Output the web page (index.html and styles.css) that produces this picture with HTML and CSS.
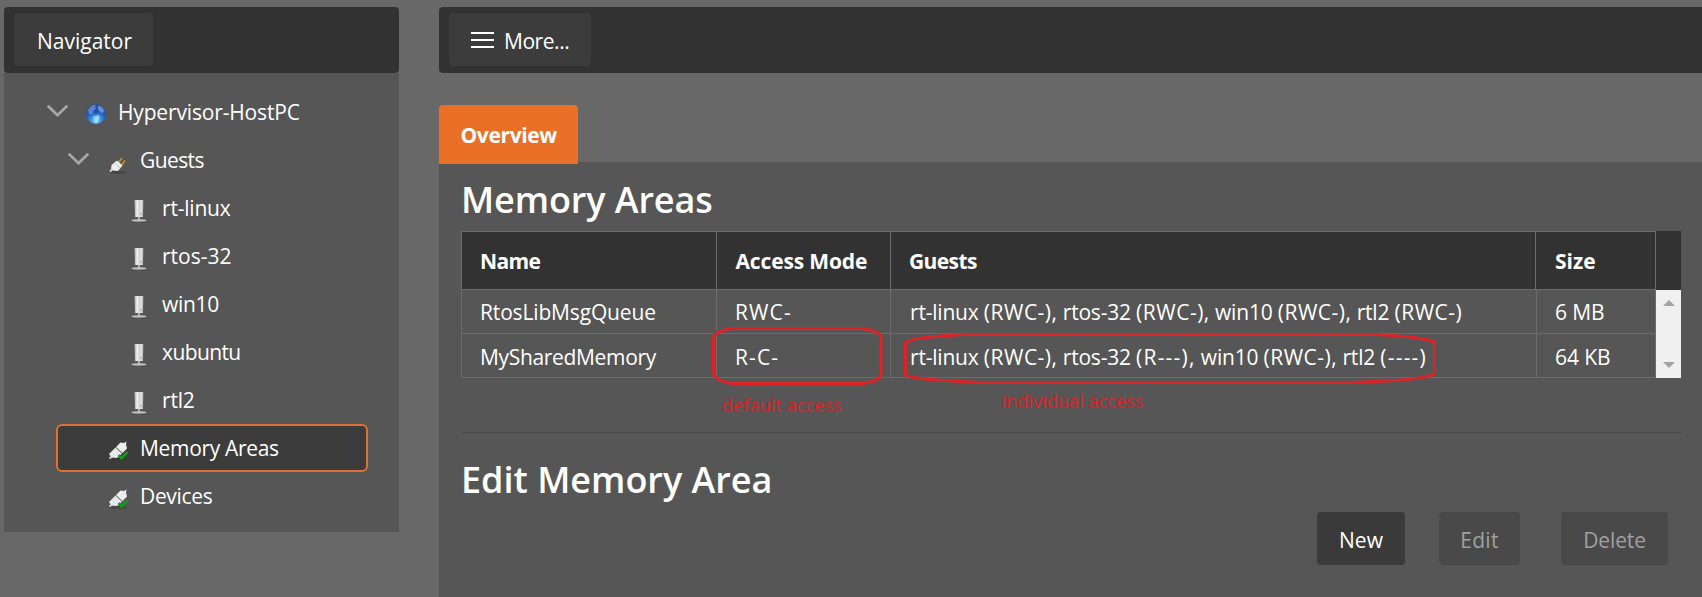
FILE: index.html
```
<!DOCTYPE html>
<html lang="en">
<head>
<meta charset="utf-8">
<title>Memory Areas</title>
<link rel="stylesheet" href="styles.css">
</head>
<body>
<svg class="defs" aria-hidden="true">
  <defs>
    <radialGradient id="globe-fill" cx="50%" cy="85%" r="80%">
      <stop offset="0" stop-color="#86e2ff"/><stop offset=".3" stop-color="#3f93e4"/><stop offset=".65" stop-color="#2458b8"/><stop offset="1" stop-color="#2a4c9c"/>
    </radialGradient>
    <linearGradient id="tower-fill"><stop offset="0" stop-color="#a8a8a8"/><stop offset=".3" stop-color="#f2f2f2"/><stop offset=".55" stop-color="#cfcfcf"/><stop offset=".75" stop-color="#e6e6e6"/><stop offset="1" stop-color="#999"/></linearGradient>
    <symbol id="chevron" viewBox="0 0 21 12"><path d="M1.500 1.500 10.500 10.300 19.500 1.500" fill="none" stroke="#a9a9a9" stroke-width="2.600" stroke-linecap="round"/></symbol>
    <symbol id="globe" viewBox="0 0 24 24">
      <circle cx="12" cy="12" r="10" fill="url(#globe-fill)"/>
      <path d="M4 8C6 4 9 2.600 12 3L11 5 12 7 9 9 8 12 5 12Z" fill="#8fb4ea" opacity=".5"/>
      <path d="M14 3.500 18 5 20 8 19 11 16 10 14 7Z" fill="#a9d0f6" opacity=".5"/>
      <path d="M9 15 14 13 16 15 14 19 12 21 10 18Z" fill="#b9f1ff" opacity=".6"/>
      <path d="M12 7 15 10 13 12 10 12 10 9Z" fill="#163b8e" opacity=".45"/>
    </symbol>
    <symbol id="plug" viewBox="0 0 24 24">
      <ellipse cx="12" cy="22.400" rx="8" ry="1.200" fill="#333" opacity=".55"/>
      <path d="M12.500 12.500 16 8M15.500 15 19 10.500" stroke="#c99a26" stroke-width="1.500"/>
      <path d="M5 20 5.500 15 11 10.500 16.500 15.500 12 21 7.500 20.500Z" fill="#eee"/>
      <path d="M8.500 12.500 14 18" stroke="#c5c5c5" stroke-width="1"/>
      <path d="M4 21.500 6.500 19" stroke="#d4d4d4" stroke-width="2"/>
    </symbol>
    <symbol id="tower" viewBox="0 0 24 24">
      <path d="M7.500 1H16.500L16 18H8Z" fill="url(#tower-fill)"/>
      <path d="M12 18V21" stroke="#ccc" stroke-width="1.600"/>
      <ellipse cx="12" cy="21.400" rx="7.500" ry="1.200" fill="#c4c4c4"/>
      <circle cx="14" cy="15" r=".7" fill="#777"/>
    </symbol>
    <symbol id="plug-ok" viewBox="0 0 24 24">
      <ellipse cx="12" cy="21.500" rx="9" ry="1.300" fill="#333" opacity=".5"/>
      <path d="M3.500 20.500 6.500 18" stroke="#ccc" stroke-width="2"/>
      <path d="M3 16 9.500 9.500 16 15.500 11 20 5.500 19.500Z" fill="#e8e8e8"/>
      <path d="M10 9 14.500 4.500 18 5 20.500 3.500 20 6.500 21 10.500 16.500 15Z" fill="#ededed"/>
      <path d="M9.800 9.300 16.200 15.500" stroke="#8a8a8a" stroke-width=".9"/>
      <path d="M12.500 17 15.500 20.300 21.500 14" fill="none" stroke="#149a22" stroke-width="2.600"/>
    </symbol>
  </defs>
</svg>

<aside class="sidebar">
  <header class="bar"><button class="bar-button navigator">Navigator</button></header>
  <ul class="tree">
    <li class="node level-0"><svg class="chevron"><use href="#chevron"/></svg><svg class="icon globe"><use href="#globe"/></svg><span class="t-host">Hypervisor-HostPC</span></li>
    <li class="node level-1"><svg class="chevron"><use href="#chevron"/></svg><svg class="icon"><use href="#plug"/></svg><span class="t-guests">Guests</span></li>
    <li class="node level-2"><svg class="icon"><use href="#tower"/></svg><span>rt-linux</span></li>
    <li class="node level-2"><svg class="icon"><use href="#tower"/></svg><span class="t-rtos">rtos-32</span></li>
    <li class="node level-2"><svg class="icon"><use href="#tower"/></svg><span class="t-win">win10</span></li>
    <li class="node level-2"><svg class="icon"><use href="#tower"/></svg><span class="t-guests">xubuntu</span></li>
    <li class="node level-2"><svg class="icon"><use href="#tower"/></svg><span>rtl2</span></li>
    <li class="node level-1 selected"><svg class="icon"><use href="#plug-ok"/></svg><span class="t-win">Memory Areas</span></li>
    <li class="node level-1 leaf"><svg class="icon"><use href="#plug-ok"/></svg><span class="t-win">Devices</span></li>
  </ul>
</aside>

<main class="main">
  <header class="bar">
    <button class="bar-button more"><svg class="burger" viewBox="0 0 23 16"><path d="M0 1H23M0 8H23M0 15H23" stroke="#fff" stroke-width="2"/></svg>More...</button>
  </header>
  <nav class="tabs"><span class="tab">Overview</span></nav>
  <section class="panel">
    <h1 class="title">Memory Areas</h1>
    <div class="table">
      <div class="row head">
        <div class="cell t-name">Name</div><div class="cell t-access">Access Mode</div><div class="cell t-guests">Guests</div><div class="cell">Size</div>
      </div>
      <div class="corner"></div>
      <div class="body">
        <div class="row">
          <div class="cell t-queue">RtosLibMsgQueue</div>
          <div class="cell mode">RWC-</div>
          <div class="cell list">rt-linux <span class="acc">(RWC-),</span> rtos-32 <span class="acc">(RWC-),</span> win10 <span class="acc">(RWC-),</span> rtl2 <span class="acc">(RWC-)</span></div>
          <div class="cell size">6 MB</div>
        </div>
        <div class="row second">
          <div class="cell t-win">MySharedMemory</div>
          <div class="cell mode">R-C-</div>
          <div class="cell list">rt-linux <span class="acc">(RWC-),</span> rtos-32 <span class="acc-none">(R---),</span> win10 <span class="acc">(RWC-),</span> rtl2 <span class="acc-none">(----)</span></div>
          <div class="cell size">64 KB</div>
        </div>
      </div>
      <div class="scrollbar"><i class="arrow up"></i><i class="arrow down"></i></div>
    </div>
    <hr class="rule">
    <h1 class="title edit">Edit Memory Area</h1>
    <div class="actions">
      <button class="action new">New</button>
      <button class="action edit-button disabled">Edit</button>
      <button class="action delete disabled">Delete</button>
    </div>
  </section>
</main>

<svg class="notes" viewBox="0 0 1702 597">
  <g fill="none" stroke="#dc2328" stroke-width="3" stroke-linejoin="round">
    <path d="M732 328.500H862C872 330 881 332.500 881 338V375C880 380 871 382 863 383.500H732C723 382 714.500 379 713.500 373V338C714 332.500 724 329.500 732 328.500Z"/>
    <path d="M962 334.500H1376C1398 336 1419 336.500 1434.500 342V374C1424 379 1402 380 1386 381L1352 382.500H982C955 381 918 380.500 905.500 375V343C910 338 932 336.500 962 334.500Z"/>
  </g>
  <text class="note" x="722" y="412">default access</text>
  <text class="note" x="1001.500" y="408">individual access</text>
</svg>
</body>
</html>
```
FILE: styles.css
```
* { box-sizing: border-box; }
body {
  margin: 0;
  height: 597px;
  padding: 7px 0 0 4px;
  display: flex;
  gap: 40px;
  position: relative;
  overflow: hidden;
  background: #686868;
  color: #fff;
  font: 21px "Open Sans", "Noto Sans", sans-serif;
}
button { font: inherit; color: inherit; border: 0; padding: 0; }
.defs { position: absolute; width: 0; height: 0; }

.bar {
  height: 66px;
  padding: 6px 10px;
  background: #323232;
  border-radius: 4px;
}
.bar-button {
  height: 53px;
  padding-top: 3px;
  background: #3c3c3c;
  border-radius: 4px;
  display: flex;
  align-items: center;
}
.navigator { width: 139px; padding-left: 23px; }
.more { width: 142px; padding-left: 22px; gap: 10px; letter-spacing: -0.45px; }
.burger { width: 23px; height: 16px; margin-top: -3px; }

/* navigator tree */
.sidebar { flex: none; width: 395px; }
.tree {
  height: 459px;
  margin: 0;
  padding: 15px 0 0;
  list-style: none;
  background: #565656;
}
.node {
  display: flex;
  align-items: center;
  height: 48px;
  letter-spacing: -0.2px;
}
.level-0 { padding-left: 43px; }
.level-1 { padding-left: 64px; }
.level-2 { padding-left: 123px; }
.leaf { padding-left: 102px; }
.chevron { width: 21px; height: 12px; margin: -3px 17px 0 0; }
.icon { width: 24px; height: 24px; margin: 6px 11px 0 0; }
.globe { margin: 4px 10px 0 -1px; }
.level-1 .icon { margin: 4px 10px 0 0; }
.selected {
  width: 312px;
  margin-left: 52px;
  padding-left: 48px;
  background: #3c3c3c;
  border: 2px solid #df7233;
  border-radius: 6px;
}

/* letter fitting */
.t-host { letter-spacing: -0.16px; }
.t-guests { letter-spacing: -0.6px; }
.t-rtos { letter-spacing: 0; }
.t-win { letter-spacing: -0.33px; }
.t-name { letter-spacing: -0.6px; }
.t-access { letter-spacing: -0.15px; }
.t-queue { letter-spacing: -0.16px; }

/* main area */
.main { flex: 1; display: flex; flex-direction: column; }
.main > .bar { border-radius: 4px 0 0 4px; flex: none; }
.tabs { display: flex; height: 57px; margin-top: 32px; }
.tab {
  width: 139px;
  height: 59px;
  line-height: 61px;
  padding-left: 21.5px;
  background: #ea6f27;
  border-radius: 4px 4px 0 0;
  font-weight: 700;
  letter-spacing: -0.36px;
  z-index: 1;
}
.panel { flex: 1; padding: 13px 21px 0 22px; background: #565656; }
.title {
  margin: 0;
  height: 48px;
  line-height: 50px;
  font-size: 36px;
  font-weight: 600;
  letter-spacing: -0.1px;
}
.table {
  display: grid;
  grid-template: 59px 88px / 1195px 25px;
  margin-top: 8px;
}
.row { display: grid; grid-template-columns: 255px 174px 646px 120px; height: 44px; border-bottom: 1px solid #6c6c6c; }
.cell { border-left: 1px solid #6c6c6c; padding-left: 18px; line-height: 45px; height: 43px; white-space: nowrap; }
.cell:last-child { border-right: 1px solid #6c6c6c; }
.second .cell { line-height: 46px; }
.head {
  grid-template-columns: 255px 174px 645px 121px;
  height: 59px;
  border-top: 1px solid #6c6c6c;
  background: #323232;
  font-weight: 700;
}
.head .cell { line-height: 58px; height: 57px; }
.head .cell:last-child { padding-left: 19px; }
.head .t-access { padding-left: 18.5px; }
.corner { background: #323232; }
.mode { letter-spacing: 1.1px; }
.cell.list { padding-left: 19px; letter-spacing: -0.2px; }
.acc { letter-spacing: 0.5px; }
.acc-none { letter-spacing: 1.2px; }
.size { letter-spacing: -0.1px; }
.scrollbar {
  display: flex;
  flex-direction: column;
  justify-content: space-between;
  align-items: center;
  padding: 10px 0;
  background: #f0f0f0;
}
.arrow { border: 6px solid transparent; }
.up { border-top: 0; border-bottom-color: #a3a3a3; }
.down { border-bottom: 0; border-top-color: #a3a3a3; }
.rule { margin: 54px 0 22px; border: 0; height: 1px; background: #4b4b4b; }
.title.edit { letter-spacing: 0; }
.actions { display: flex; justify-content: flex-end; margin: 9px 13px 0 0; }
.action {
  height: 53px;
  padding-top: 3px;
  background: #3a3a3a;
  border-radius: 4px;
}
.disabled { background: #494949; color: #a0a0a0; }
.new { width: 88px; margin-right: 34px; }
.edit-button { width: 81px; margin-right: 41px; letter-spacing: 0.3px; }
.delete { width: 107px; letter-spacing: -0.12px; }

/* hand-drawn annotations over the table */
.notes { position: absolute; left: 0; top: 0; width: 1702px; height: 597px; pointer-events: none; }
.note { fill: #dc2328; font-size: 18px; letter-spacing: 0.1px; }
```
